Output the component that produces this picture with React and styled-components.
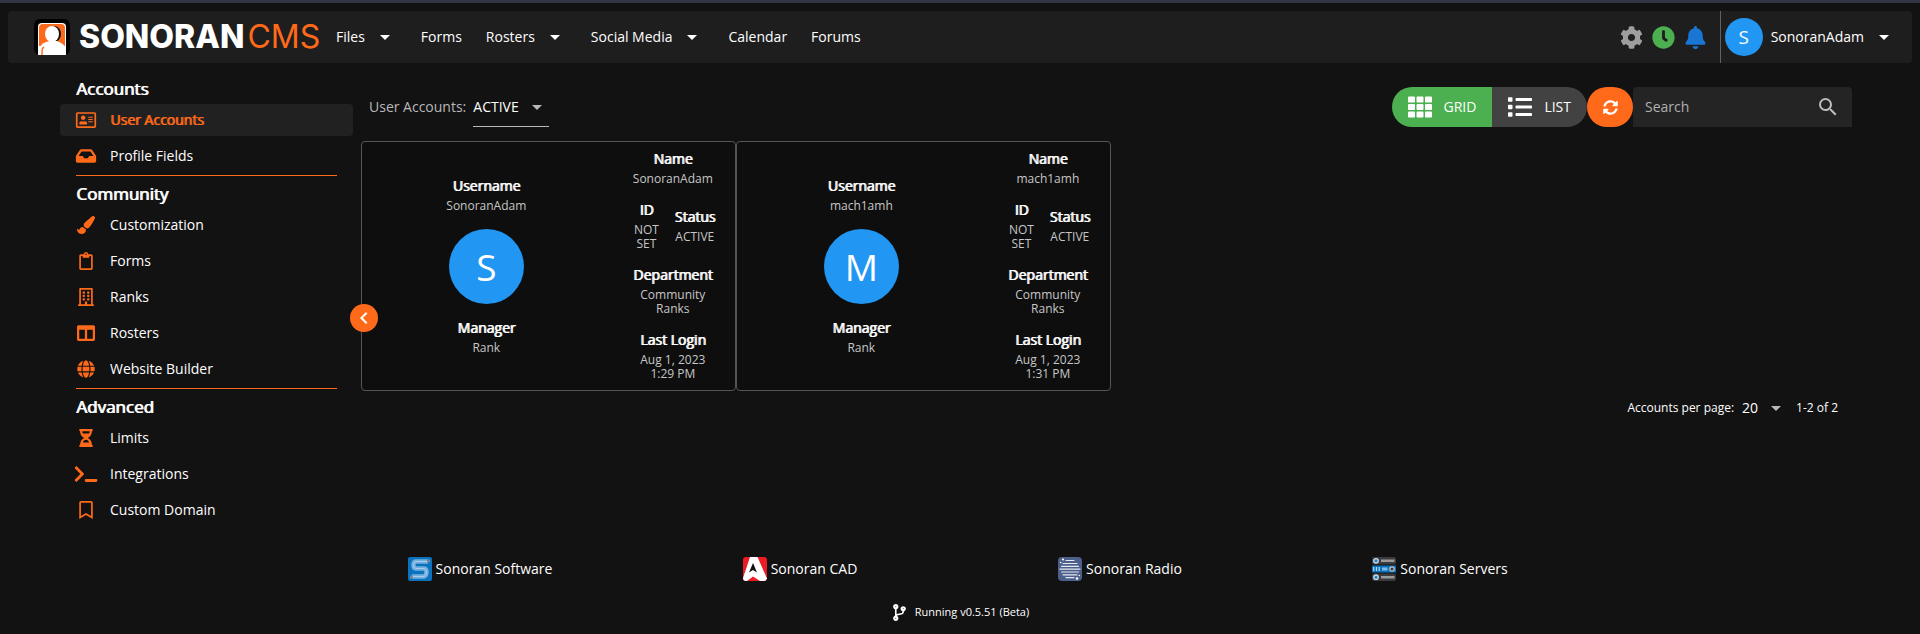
import React from "react";
import styled, { createGlobalStyle, css } from "styled-components";
import {
  FaRegAddressCard,
  FaInbox,
  FaPaintBrush,
  FaRegClipboard,
  FaRegBuilding,
  FaColumns,
  FaGlobe,
  FaHourglassHalf,
  FaTerminal,
  FaRegBookmark,
  FaCog,
  FaClock,
  FaBell,
  FaTh,
  FaList,
  FaSyncAlt,
  FaCodeBranch,
} from "react-icons/fa";
import { MdArrowDropDown, MdSearch, MdChevronLeft } from "react-icons/md";

const accent = "#ff6a1a";

const GlobalStyle = createGlobalStyle`
  *, *::before, *::after { box-sizing: border-box; }
  body {
    margin: 0;
    background: #121212;
    color: #fff;
    font: 14px/20px "Open Sans", "Noto Sans", sans-serif;
  }
  button, input, select { font: inherit; color: inherit; border: 0; margin: 0; padding: 0; background: none; }
  button { cursor: pointer; }
  a { color: inherit; text-decoration: none; }
  ul { list-style: none; margin: 0; padding: 0; }
  h2, h3, p, dl, dt, dd { margin: 0; font-weight: 400; }
  svg { display: block; flex: none; }
`;

const strong = css`
  text-shadow: 1px 0 0 currentColor;
`;

const Page = styled.div`
  border-top: 3px solid #2f3545;
`;

const Header = styled.header`
  display: flex;
  height: 52px;
  margin: 8px 8px 0;
  padding: 0 16px 0 26px;
  background: #1e1e1e;
  border-radius: 4px;
`;

const Brand = styled.a`
  display: flex;
  align-items: center;
  gap: 9px;
  width: 290px;
`;

const Wordmark = styled.span`
  font: 800 32px/36px Inter, sans-serif;
  white-space: nowrap;
`;

const WordmarkSuffix = styled.span`
  margin-left: 3px;
  font-weight: 400;
  color: ${accent};
`;

const Nav = styled.nav`
  display: flex;
  align-items: center;
`;

const NavItem = styled.button`
  display: flex;
  align-items: center;
  gap: 8px;
  height: 36px;
  padding: 0 12px;
`;

const HeaderTools = styled.div`
  display: flex;
  align-items: center;
  gap: 8px;
  margin-left: auto;
  padding-right: 12px;
`;

const ToolButton = styled.button`
  display: grid;
  place-items: center;
  width: 24px;
  height: 24px;
  font-size: 23px;
  color: ${(p) => p.$color};
`;

const AccountMenu = styled.button`
  display: flex;
  align-items: center;
  gap: 8px;
  padding-left: 4px;
  border-left: 1px solid #616161;
`;

const Avatar = styled.span`
  display: grid;
  place-items: center;
  width: ${(p) => p.$size}px;
  height: ${(p) => p.$size}px;
  border-radius: 50%;
  background: #2196f3;
  font-size: ${(p) => p.$font}px;
  line-height: 1;
`;

const Body = styled.div`
  display: flex;
  padding: 7px 68px 0 60px;
`;

const Sidebar = styled.aside`
  position: relative;
  flex: 0 0 293px;
  margin-right: 8px;
  padding-top: 1px;
`;

const SideGroup = styled.section`
  & + &::before {
    content: "";
    display: block;
    height: 1px;
    margin: 3px 16px 0;
    background: ${accent};
  }
`;

const SideHeading = styled.h2`
  padding: 7px 16px 4px;
  font-size: 17px;
  line-height: 22px;
  ${strong}
`;

const SideList = styled.ul`
  display: grid;
  gap: 4px;
`;

const SideLink = styled.a`
  display: flex;
  align-items: center;
  gap: 14px;
  height: 32px;
  padding: 0 16px;
  border-radius: 4px;
  ${(p) =>
    p.$active &&
    css`
      background: #212121;
      color: ${accent};
      ${strong}
    `}
`;

const SideIcon = styled.span`
  display: flex;
  justify-content: center;
  width: 20px;
  color: ${accent};
  svg {
    width: 24px;
    height: 18px;
  }
`;

const CollapseButton = styled.button`
  position: absolute;
  top: 234px;
  right: -25px;
  z-index: 1;
  display: grid;
  place-items: center;
  width: 28px;
  height: 28px;
  border-radius: 50%;
  background: ${accent};
  font-size: 24px;
`;

const Main = styled.main`
  flex: 1;
  min-width: 0;
`;

const Toolbar = styled.div`
  display: flex;
  align-items: center;
  padding: 17px 0 0 8px;
`;

const FilterLabel = styled.label`
  margin-right: 7px;
  color: #b8b8b8;
`;

const SelectBox = styled.div`
  display: grid;
  align-items: center;
  color: #b8b8b8;
  & > * {
    grid-area: 1 / 1;
  }
  svg {
    justify-self: end;
    pointer-events: none;
  }
`;

const Select = styled.select`
  appearance: none;
  color: #fff;
`;

const FilterSelect = styled(Select)`
  width: 76px;
  height: 40px;
  border-bottom: 1px solid #b8b8b8;
`;

const PageSizeSelect = styled(Select)`
  width: 46px;
  height: 24px;
`;

const ToolbarActions = styled.div`
  display: flex;
  margin-left: auto;
`;

const ViewToggle = styled.div`
  display: flex;
  overflow: hidden;
  border-radius: 20px;
`;

const ViewButton = styled.button`
  display: flex;
  align-items: center;
  gap: 12px;
  height: 40px;
  padding: 0 16px;
  background: ${(p) => (p.$active ? "#4caf50" : "#424242")};
  svg {
    font-size: 24px;
  }
`;

const RefreshButton = styled.button`
  display: grid;
  place-items: center;
  width: 46px;
  height: 40px;
  border-radius: 20px;
  background: ${accent};
`;

const SearchField = styled.label`
  display: flex;
  align-items: center;
  width: 219px;
  height: 40px;
  padding: 0 12px;
  background: #242424;
  border-radius: 4px 4px 0 0;
  color: #bdbdbd;
`;

const SearchInput = styled.input`
  flex: 1;
  min-width: 0;
  outline: 0;
  &::placeholder {
    color: #b0b0b0;
    opacity: 1;
  }
`;

const Cards = styled.ul`
  display: flex;
  flex-wrap: wrap;
  padding-top: 14px;
`;

const Card = styled.li`
  display: grid;
  grid-template-columns: 2fr 1fr;
  width: 375px;
  min-height: 250px;
  border: 1px solid #555;
  border-radius: 4px;
  background: #0e0e0e;
  text-align: center;
`;

const CardProfile = styled.div`
  display: flex;
  flex-direction: column;
  align-items: center;
  justify-content: center;
  gap: 16px;
`;

const CardDetails = styled.div`
  display: flex;
  flex-direction: column;
  justify-content: center;
`;

const DetailRow = styled.div`
  display: flex;
  align-items: center;
  justify-content: center;
  gap: 12px;
  padding: 8px 16px;
`;

const Detail = styled.dl`
  flex: ${(p) => (p.$narrow ? "0 0 32px" : "none")};
  max-width: 100%;
`;

const DetailTitle = styled.dt`
  line-height: 16px;
  ${strong}
`;

const DetailText = styled.dd`
  margin-top: 5px;
  font-size: 12px;
  line-height: 14px;
  color: #c6c6c6;
  white-space: pre-line;
`;

const Pagination = styled.div`
  display: flex;
  align-items: center;
  justify-content: flex-end;
  padding: 5px 14px 0 0;
  font-size: 12px;
  ${SelectBox} {
    margin: 0 8px;
    font-size: 14px;
  }
`;

const Footer = styled.footer`
  padding: 31px 0 12px;
`;

const ProductLinks = styled.div`
  display: grid;
  grid-template-columns: repeat(4, 1fr);
  width: calc(100% * 2 / 3);
  margin: 0 auto;
`;

const ProductLink = styled.a`
  display: flex;
  align-items: center;
  justify-content: center;
  gap: 4px;
`;

const Version = styled.p`
  display: flex;
  align-items: center;
  justify-content: center;
  gap: 7px;
  padding-top: 21px;
  font-size: 11px;
  svg {
    font-size: 17px;
  }
`;

const CmsLogo = () => (
  <svg width="36" height="36" viewBox="0 0 36 36" aria-hidden="true">
    <rect width="36" height="36" rx="6" fill="#000" />
    <path d="M4 36V8q0-4 4-4h20q4 0 4 4v28z" fill="#fff" />
    <path d="M5 27V9q0-4 4-4h18q4 0 4 4v18z" fill={accent} />
    <ellipse cx="20" cy="15" rx="7" ry="8" fill="#111" />
    <path d="M5 36v-4q1-7 7-9l4-1h7l4 2q4 2 5 7v5z" fill="#fff" />
    <ellipse cx="18" cy="15" rx="7" ry="8" fill="#fff" />
    <path d="M8 36v-4q0-3 2-4" fill="none" stroke={accent} strokeWidth="1.4" />
  </svg>
);

const SoftwareLogo = () => (
  <svg width="24" height="24" viewBox="0 0 24 24" aria-hidden="true">
    <rect width="24" height="24" rx="2" fill="#0b72bd" />
    <path d="M20 4.500H8Q5.500 4.500 5.500 8t2.500 3.500h8q2.500 0 2.500 3.500T16 19.500H4" fill="none" stroke="#72afdf" strokeWidth="4.500" />
    <path d="M20 4.500H8Q5.500 4.500 5.500 8t2.500 3.500h8q2.500 0 2.500 3.500T16 19.500H4" fill="none" stroke="#a8cdec" strokeWidth="1" />
    <path d="M19 2.500h3v3h-3zM2 18.500h3v3H2z" fill="#7b8794" />
  </svg>
);

const CadLogo = () => (
  <svg width="24" height="24" viewBox="0 0 24 24" aria-hidden="true">
    <rect width="24" height="24" rx="3" fill="#ed1c24" />
    <path d="M7 0h7.500L24 21.500Q23 24 21 24h-4l-7-4.500L4 24H3q-3 0-3-3z" fill="#fff" />
    <path d="M10 6l4 9.500-4-2.500-4 2.500z" fill="#111" />
  </svg>
);

const RadioLogo = () => (
  <svg width="24" height="24" viewBox="0 0 24 24" aria-hidden="true">
    <rect width="24" height="24" rx="4" fill="#4c608b" />
    <path
      d="M8 3.500h8M5 6.500h14M3.500 9.300h17M2 12.200h20M3.500 15h17M5 17.800h14M8 20.600h8"
      stroke="#e4e8f0"
      strokeWidth="1.200"
      strokeLinecap="round"
    />
    <g fill="#fff">
      <circle cx="5" cy="2.500" r="1.100" />
      <circle cx="2.700" cy="5.500" r=".8" />
      <circle cx="19" cy="21.500" r="1.300" />
      <circle cx="21.300" cy="18.500" r=".8" />
    </g>
  </svg>
);

const ServersLogo = () => (
  <svg width="24" height="24" viewBox="0 0 24 24" aria-hidden="true">
    <rect width="24" height="7.500" rx="2" fill="#3b3b3d" />
    <rect y="16.500" width="24" height="7.500" rx="2" fill="#3b3b3d" />
    <rect y="8.500" width="24" height="7" fill="#0b72bd" />
    <path d="M9 3.800h13.500M9 20.200h13.500" stroke="#9a9a9a" strokeWidth="2.600" />
    <g fill="#1b7fc4" stroke="#c9d8e4" strokeWidth="1.400">
      <circle cx="4" cy="3.800" r="2.200" />
      <circle cx="4" cy="20.200" r="2.200" />
    </g>
    <path d="M1.700 10v4M4.500 10v4M7.200 10v4" stroke="#a8d2f2" strokeWidth="1.300" />
    <path d="M10 12h5.500" stroke="#7cb9e8" strokeWidth="3" />
    <circle cx="20" cy="12" r="2.200" fill="#3b3b3d" stroke="#c4c4c4" strokeWidth="1.200" />
  </svg>
);

const navItems = [
  { label: "Files", menu: true },
  { label: "Forms" },
  { label: "Rosters", menu: true },
  { label: "Social Media", menu: true },
  { label: "Calendar" },
  { label: "Forums" },
];

const sideGroups = [
  {
    title: "Accounts",
    items: [
      { label: "User Accounts", icon: FaRegAddressCard, active: true },
      { label: "Profile Fields", icon: FaInbox },
    ],
  },
  {
    title: "Community",
    items: [
      { label: "Customization", icon: FaPaintBrush },
      { label: "Forms", icon: FaRegClipboard },
      { label: "Ranks", icon: FaRegBuilding },
      { label: "Rosters", icon: FaColumns },
      { label: "Website Builder", icon: FaGlobe },
    ],
  },
  {
    title: "Advanced",
    items: [
      { label: "Limits", icon: FaHourglassHalf },
      { label: "Integrations", icon: FaTerminal },
      { label: "Custom Domain", icon: FaRegBookmark },
    ],
  },
];

const accounts = [
  { username: "SonoranAdam", initial: "S", login: "Aug 1, 2023\n1:29 PM" },
  { username: "mach1amh", initial: "M", login: "Aug 1, 2023\n1:31 PM" },
];

const products = [
  { label: "Sonoran Software", logo: SoftwareLogo },
  { label: "Sonoran CAD", logo: CadLogo },
  { label: "Sonoran Radio", logo: RadioLogo },
  { label: "Sonoran Servers", logo: ServersLogo },
];

const Field = ({ title, text, narrow }) => (
  <Detail $narrow={narrow}>
    <DetailTitle>{title}</DetailTitle>
    <DetailText>{text}</DetailText>
  </Detail>
);

const AccountCard = ({ username, initial, login }) => (
  <Card>
    <CardProfile>
      <Field title="Username" text={username} />
      <Avatar $size={75} $font={37}>{initial}</Avatar>
      <Field title="Manager" text="Rank" />
    </CardProfile>
    <CardDetails>
      <DetailRow><Field title="Name" text={username} /></DetailRow>
      <DetailRow>
        <Field title="ID" text="NOT SET" narrow />
        <Field title="Status" text="ACTIVE" />
      </DetailRow>
      <DetailRow><Field title="Department" text="Community Ranks" /></DetailRow>
      <DetailRow><Field title="Last Login" text={login} /></DetailRow>
    </CardDetails>
  </Card>
);

export default function App() {
  return (
    <Page>
      <GlobalStyle />
      <Header>
        <Brand href="#home">
          <CmsLogo />
          <Wordmark>
            SONORAN<WordmarkSuffix>CMS</WordmarkSuffix>
          </Wordmark>
        </Brand>
        <Nav>
          {navItems.map((item) => (
            <NavItem key={item.label}>
              {item.label}
              {item.menu && <MdArrowDropDown size={24} />}
            </NavItem>
          ))}
        </Nav>
        <HeaderTools>
          <ToolButton $color="#9e9e9e" aria-label="Settings"><FaCog /></ToolButton>
          <ToolButton $color="#4caf50" aria-label="Time clock"><FaClock /></ToolButton>
          <ToolButton $color="#1976d2" aria-label="Notifications"><FaBell /></ToolButton>
        </HeaderTools>
        <AccountMenu>
          <Avatar $size={38} $font={19}>S</Avatar>
          SonoranAdam
          <MdArrowDropDown size={24} />
        </AccountMenu>
      </Header>

      <Body>
        <Sidebar>
          {sideGroups.map((group) => (
            <SideGroup key={group.title}>
              <SideHeading>{group.title}</SideHeading>
              <SideList>
                {group.items.map(({ label, icon: Icon, active }) => (
                  <li key={label}>
                    <SideLink href="#" $active={active}>
                      <SideIcon><Icon /></SideIcon>
                      {label}
                    </SideLink>
                  </li>
                ))}
              </SideList>
            </SideGroup>
          ))}
          <CollapseButton aria-label="Collapse menu"><MdChevronLeft /></CollapseButton>
        </Sidebar>

        <Main>
          <Toolbar>
            <FilterLabel htmlFor="status">User Accounts:</FilterLabel>
            <SelectBox>
              <FilterSelect id="status" defaultValue="ACTIVE">
                <option>ACTIVE</option>
              </FilterSelect>
              <MdArrowDropDown size={24} />
            </SelectBox>
            <ToolbarActions>
              <ViewToggle>
                <ViewButton $active><FaTh />GRID</ViewButton>
                <ViewButton><FaList />LIST</ViewButton>
              </ViewToggle>
              <RefreshButton aria-label="Refresh"><FaSyncAlt size={15} /></RefreshButton>
              <SearchField>
                <SearchInput type="search" placeholder="Search" aria-label="Search" />
                <MdSearch size={24} />
              </SearchField>
            </ToolbarActions>
          </Toolbar>
          <Cards>
            {accounts.map((account) => (
              <AccountCard key={account.username} {...account} />
            ))}
          </Cards>
          <Pagination>
            <label htmlFor="page-size">Accounts per page:</label>
            <SelectBox>
              <PageSizeSelect id="page-size" defaultValue="20">
                <option>20</option>
              </PageSizeSelect>
              <MdArrowDropDown size={24} />
            </SelectBox>
            <span>1-2 of 2</span>
          </Pagination>
        </Main>
      </Body>

      <Footer>
        <ProductLinks>
          {products.map(({ label, logo: Logo }) => (
            <ProductLink key={label} href="#">
              <Logo />
              {label}
            </ProductLink>
          ))}
        </ProductLinks>
        <Version>
          <FaCodeBranch />
          Running v0.5.51 (Beta)
        </Version>
      </Footer>
    </Page>
  );
}
